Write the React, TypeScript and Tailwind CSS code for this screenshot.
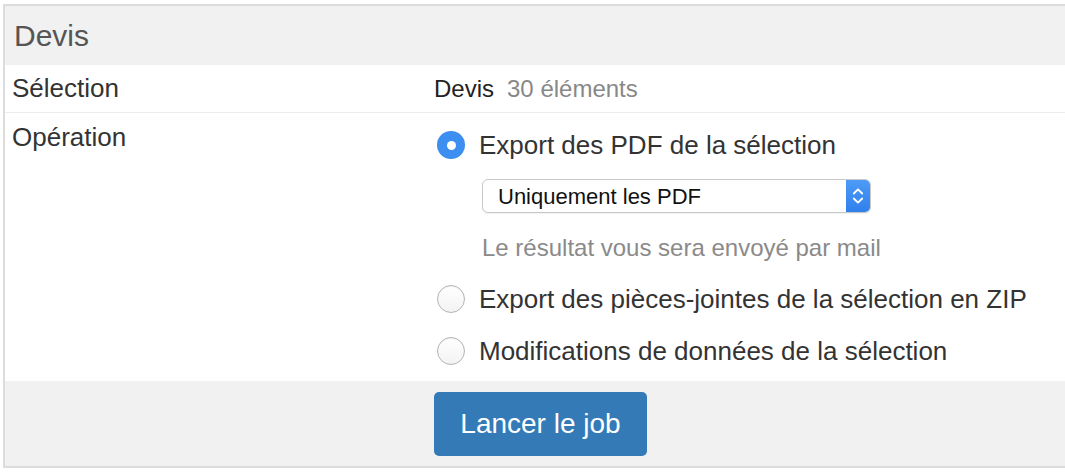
import React from 'react'

const font = { fontFamily: '"Liberation Sans", Arial, sans-serif' }

function Radio({ checked }: { checked?: boolean }) {
  if (checked) {
    return (
      <span className="flex h-[28px] w-[28px] shrink-0 items-center justify-center rounded-full bg-[#3c8ef0]">
        <span className="h-[9px] w-[9px] rounded-full bg-white" />
      </span>
    )
  }
  return (
    <span className="h-[28px] w-[28px] shrink-0 rounded-full border border-[#b4b4b4] bg-gradient-to-b from-white to-[#f3f3f3] shadow-[inset_0_1px_1px_rgba(0,0,0,0.06)]" />
  )
}

export default function App() {
  return (
    <div className="min-h-screen bg-white pl-[3px] pt-[4px]" style={font}>
      <div className="w-[1070px] border-2 border-r-0 border-[#dcdcdc]">
        <div className="flex h-[59px] items-center bg-[#f1f1f1] pl-[9px] text-[30px] text-[#555]">Devis</div>

        <div className="grid grid-cols-[429px_1fr] border-b border-[#ececec]">
          <div className="flex h-[47px] items-center pl-[7px] text-[26px] text-[#333]">Sélection</div>
          <div className="flex items-center gap-[13px] text-[24px]">
            <span className="text-[#222]">Devis</span>
            <span className="text-[#888]">30 éléments</span>
          </div>
        </div>

        <div className="grid h-[268px] grid-cols-[429px_1fr]">
          <div className="pt-[9px] pl-[7px] text-[26px] leading-[30px] text-[#333]">Opération</div>
          <div className="flex flex-col pt-[17px]">
            <label className="flex h-[30px] items-center gap-[14px] pl-[3px] text-[26px] text-[#333]">
              <Radio checked />
              <span>Export des PDF de la sélection</span>
            </label>
            <div className="ml-[48px] mt-[19px] flex h-[34px] w-[389px] items-center overflow-hidden rounded-[6px] border border-[#c8c8c8] bg-white shadow-[0_1px_1px_rgba(0,0,0,0.06)]">
              <span className="flex-1 pl-[15px] text-[22px] text-[#111]">Uniquement les PDF</span>
              <span className="flex h-full w-[24px] items-center justify-center bg-gradient-to-b from-[#4d9bf6] to-[#2f80ec]">
                <svg width="12" height="22" viewBox="0 0 12 22" fill="none">
                  <path d="M1.8 8.5L6 4.3L10.2 8.5" stroke="white" strokeWidth="1.8" strokeLinecap="round" strokeLinejoin="round" />
                  <path d="M1.8 13.5L6 17.7L10.2 13.5" stroke="white" strokeWidth="1.8" strokeLinecap="round" strokeLinejoin="round" />
                </svg>
              </span>
            </div>
            <div className="ml-[48px] mt-[20px] h-[30px] text-[24px] leading-[30px] text-[#8a8a8a]">Le résultat vous sera envoyé par mail</div>
            <label className="mt-[21px] flex h-[30px] items-center gap-[14px] pl-[3px] text-[26px] text-[#333]">
              <Radio />
              <span>Export des pièces-jointes de la sélection en ZIP</span>
            </label>
            <label className="mt-[22px] flex h-[30px] items-center gap-[14px] pl-[3px] text-[26px] text-[#333]">
              <Radio />
              <span>Modifications de données de la sélection</span>
            </label>
          </div>
        </div>

        <div className="grid h-[85px] grid-cols-[429px_1fr] bg-[#f1f1f1]">
          <div />
          <div className="pt-[11px]">
            <button className="flex h-[64px] w-[213px] items-center justify-center rounded-[5px] bg-[#337ab7] text-[28px] text-white">
              Lancer le job
            </button>
          </div>
        </div>
      </div>
    </div>
  )
}
